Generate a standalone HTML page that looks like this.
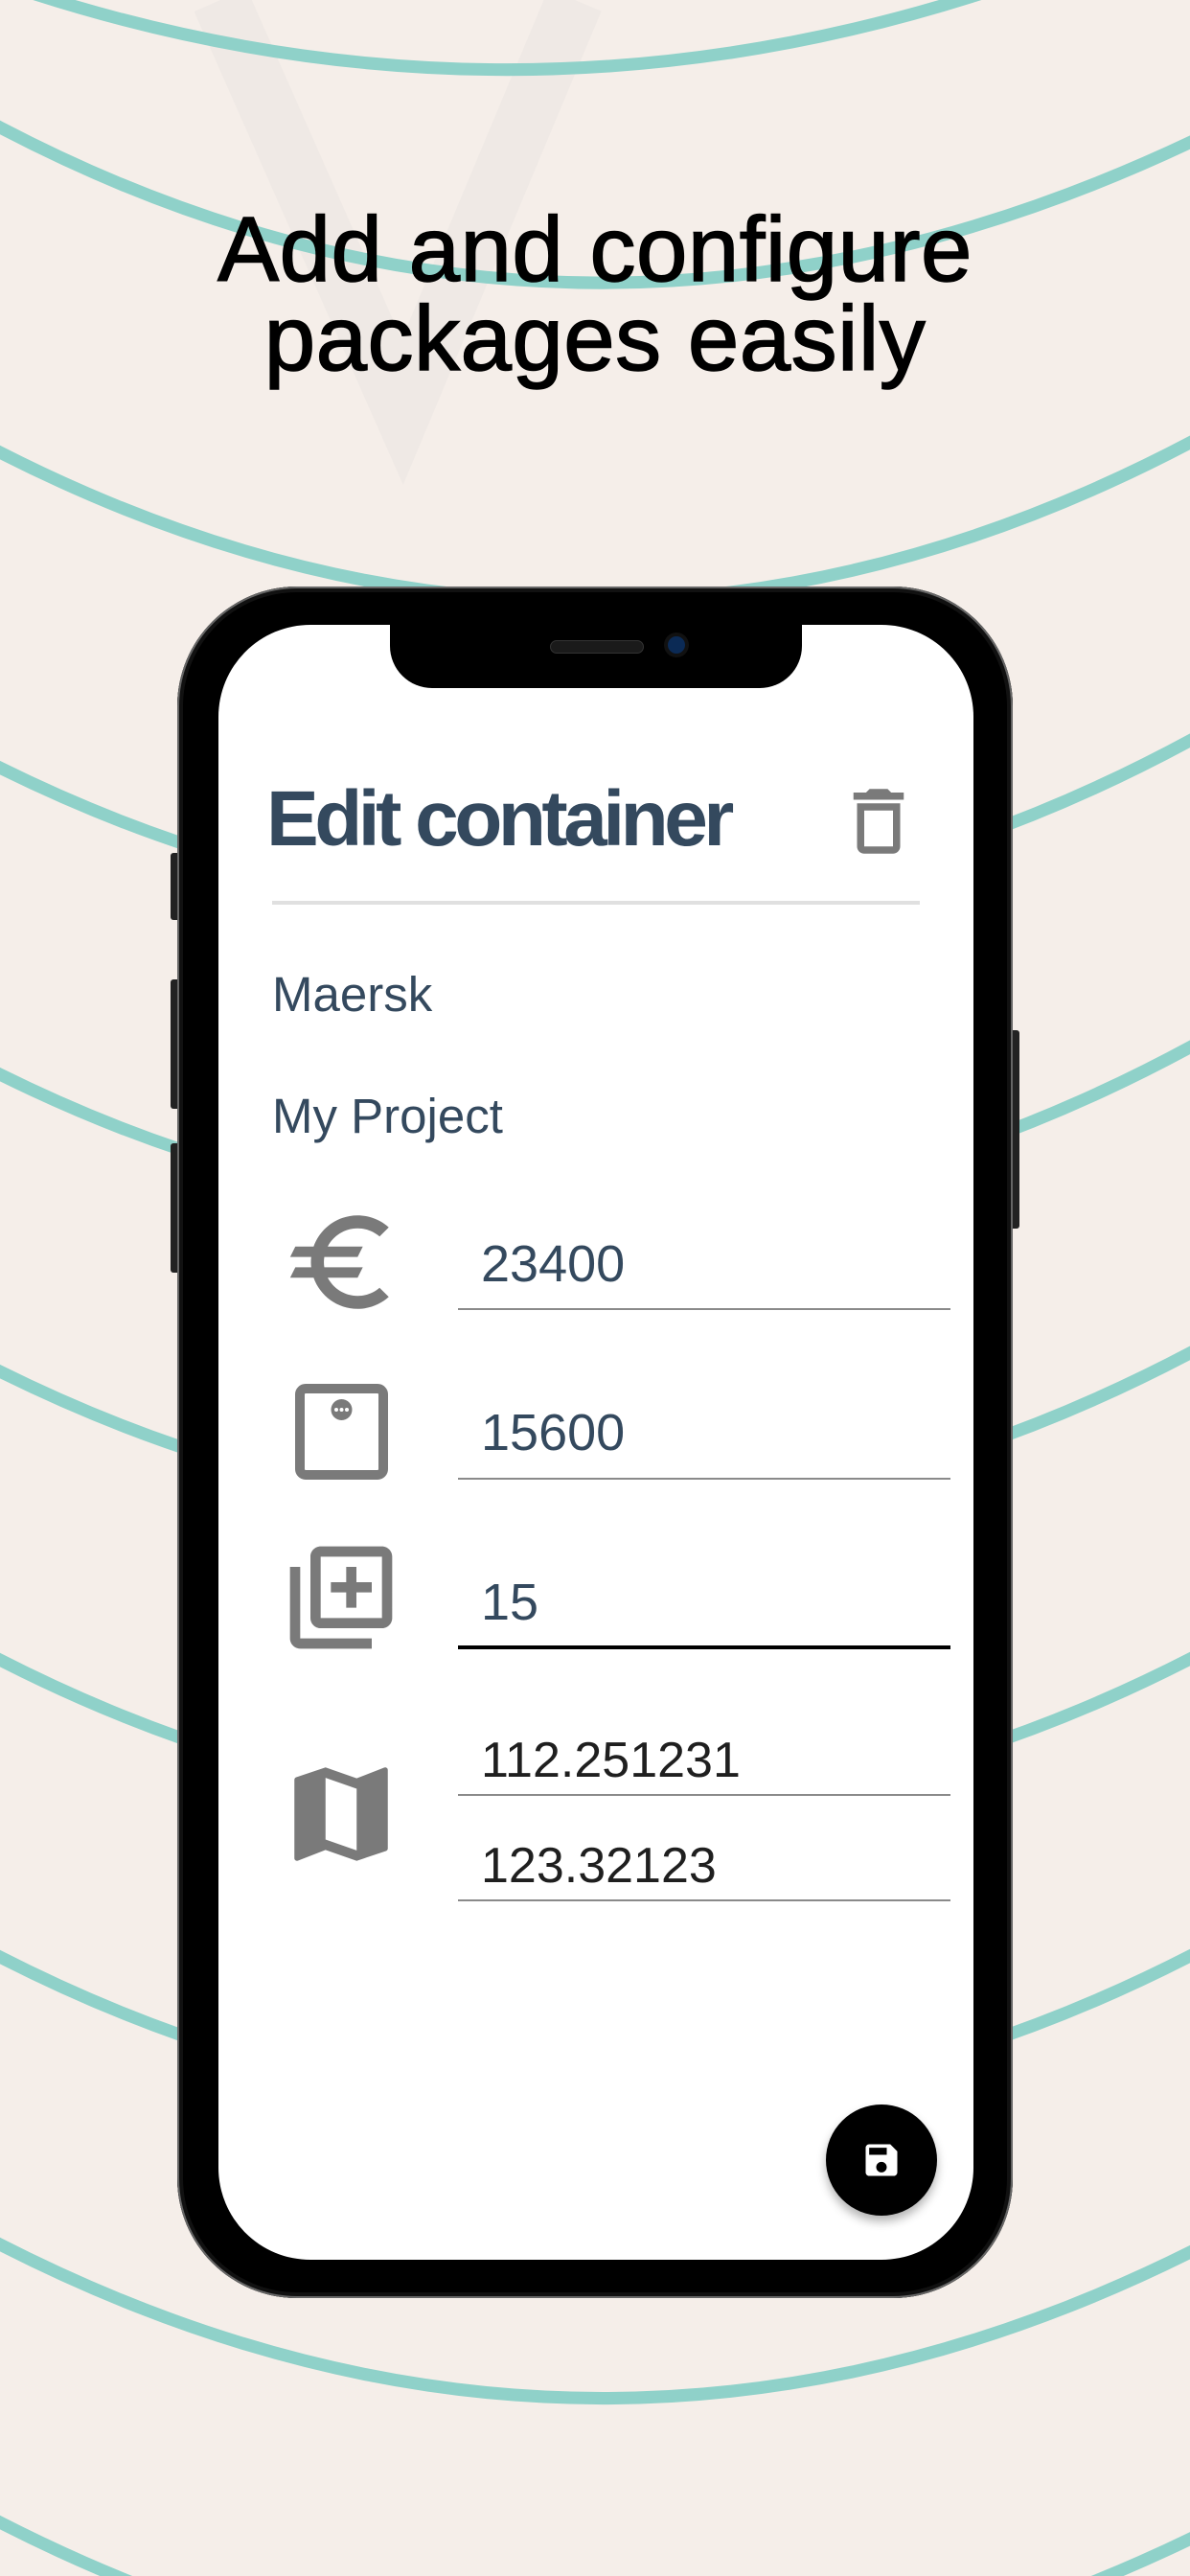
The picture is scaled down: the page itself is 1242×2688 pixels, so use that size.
<!DOCTYPE html>
<html><head><meta charset="utf-8"><style>
html,body{margin:0;padding:0}
body{width:1242px;height:2688px;position:relative;overflow:hidden;background:#f5eee9;font-family:"Liberation Sans",sans-serif}
.abs{position:absolute}
h1{position:absolute;left:0;top:214px;width:1242px;margin:0;text-align:center;font-weight:400;font-size:96px;line-height:93px;color:#000;letter-spacing:0.5px;-webkit-text-stroke:1.5px #000}
.t{position:absolute;color:#34495e;white-space:nowrap}
.ul{position:absolute;left:478px;width:514px;height:2px;background:#8a8a8a}
</style></head><body>
<svg class="abs" style="left:0;top:0" width="1242" height="2688" viewBox="0 0 1242 2688">
<path d="M230 0 L420 430 L600 0" fill="none" stroke="#efe9e5" stroke-width="60"/>
<g fill="none" stroke="#8fd1c9" stroke-width="13">
<path d="M-60 -40 Q620 220 1300 -120"/>
<path d="M-60 100 Q600 480 1300 120"/>
<path d="M-60 440 Q620 820 1300 430"/>
<path d="M-60 770 Q620 1140 1300 740"/>
<path d="M-60 1090 Q620 1460 1300 1060"/>
<path d="M-60 1400 Q620 1770 1300 1380"/>
<path d="M-60 1700 Q620 2080 1300 1700"/>
<path d="M-60 2010 Q620 2390 1300 2010"/>
<path d="M-60 2310 Q620 2690 1300 2320"/>
<path d="M-60 2600 Q620 2980 1300 2620"/>
</g>
</svg>
<h1>Add and configure<br>packages easily</h1>
<div class="abs" style="left:178px;top:890px;width:10px;height:70px;background:#222;border-radius:3px"></div>
<div class="abs" style="left:178px;top:1022px;width:10px;height:135px;background:#222;border-radius:3px"></div>
<div class="abs" style="left:178px;top:1193px;width:10px;height:135px;background:#222;border-radius:3px"></div>
<div class="abs" style="left:1054px;top:1075px;width:10px;height:207px;background:#222;border-radius:3px"></div>
<div class="abs" style="left:185px;top:612px;width:872px;height:1786px;background:#000;border-radius:125px;box-shadow:inset 0 0 0 2px #666,inset 0 0 0 6px #111"></div>
<div class="abs" style="left:228px;top:652px;width:788px;height:1706px;background:#fff;border-radius:96px;overflow:hidden">
  <div class="abs" style="left:179px;top:-10px;width:430px;height:76px;background:#000;border-radius:0 0 44px 44px"></div>
  <div class="abs" style="left:346px;top:16px;width:96px;height:12px;background:#1a1a1a;border-radius:7px;border:1px solid #333"></div>
  <div class="abs" style="left:469px;top:12px;width:18px;height:18px;background:#0b2a55;border-radius:50%;box-shadow:0 0 0 4px #111"></div>
</div>
<div class="t" style="left:278px;top:805px;font-size:82px;font-weight:700;letter-spacing:-4.5px;line-height:100px">Edit container</div>
<svg class="abs" style="left:872px;top:812px" width="90" height="90" viewBox="0 0 24 24"><path fill="#7a7a7a" d="M6 19c0 1.1.9 2 2 2h8c1.1 0 2-.9 2-2V7H6v12zM8 9h8v10H8V9zm7.5-5l-1-1h-5l-1 1H5v2h14V4z"/></svg>
<div class="abs" style="left:284px;top:940px;width:676px;height:4px;background:#e0e0e0"></div>
<div class="t" style="left:284px;top:1008px;font-size:51px;line-height:60px">Maersk</div>
<div class="t" style="left:284px;top:1135px;font-size:51px;line-height:60px">My Project</div>

<svg class="abs" style="left:292px;top:1252px" width="130" height="130" viewBox="0 0 24 24"><path fill="#7a7a7a" d="M15 18.5c-2.51 0-4.68-1.42-5.76-3.5H15l1-2H8.58c-.05-.33-.08-.66-.08-1s.03-.67.08-1H15l1-2H9.24C10.32 6.92 12.5 5.5 15 5.5c1.61 0 3.09.59 4.23 1.570L21 5.3C19.41 3.87 17.3 3 15 3c-3.92 0-7.240 2.51-8.48 6H3l-1 2h4.06c-.04.33-.06.66-.06 1s.02.67.06 1H3l-1 2h4.52c1.24 3.49 4.56 6 8.48 6 2.31 0 4.41-.87 6-2.3l-1.78-1.77c-1.130.98-2.6 1.57-4.22 1.57z"/></svg>
<div class="t" style="left:502px;top:1287px;font-size:54px;line-height:64px">23400</div>
<div class="ul" style="top:1365px"></div>

<svg class="abs" style="left:308px;top:1444px" width="97" height="100" viewBox="0 0 97 100"><rect x="5" y="5" width="87" height="90" rx="6" fill="none" stroke="#7a7a7a" stroke-width="10"/><circle cx="48.5" cy="27" r="11" fill="#7a7a7a"/><circle cx="43" cy="27" r="2" fill="#fff"/><circle cx="48.5" cy="27" r="2" fill="#fff"/><circle cx="54" cy="27" r="2" fill="#fff"/></svg>
<div class="t" style="left:502px;top:1463px;font-size:54px;line-height:64px">15600</div>
<div class="ul" style="top:1542px"></div>

<svg class="abs" style="left:292px;top:1603px" width="128" height="128" viewBox="0 0 24 24"><path fill="#7a7a7a" d="M4 6H2v14c0 1.1.9 2 2 2h14v-2H4V6zm16-4H8c-1.1 0-2 .9-2 2v12c0 1.1.9 2 2 2h12c1.1 0 2-.9 2-2V4c0-1.1-.9-2-2-2zm0 14H8V4h12v12zm-7-2h2v-3h3V9h-3V6h-2v3h-3v2h3v3z"/></svg>
<div class="t" style="left:502px;top:1640px;font-size:54px;line-height:64px">15</div>
<div class="ul" style="top:1717px;height:4px;background:#000"></div>

<svg class="abs" style="left:291px;top:1828px" width="130" height="130" viewBox="0 0 24 24"><path fill="#7a7a7a" d="M20.5 3l-.16.03L15 5.1 9 3 3.36 4.9c-.21.07-.36.25-.36.48V20.5c0 .28.22.5.5.5l.16-.03L9 18.9l6 2.1 5.64-1.9c.21-.07.36-.25.36-.48V3.5c0-.28-.22-.5-.5-.5zM15 19l-6-2.11V5l6 2.11V19z"/></svg>
<div class="t" style="left:502px;top:1805px;font-size:52px;line-height:64px;color:#1f1f1f">112.251231</div>
<div class="ul" style="top:1872px"></div>
<div class="t" style="left:502px;top:1915px;font-size:52px;line-height:64px;color:#1f1f1f">123.32123</div>
<div class="ul" style="top:1982px"></div>

<div class="abs" style="left:862px;top:2196px;width:116px;height:116px;border-radius:50%;background:#000;box-shadow:0 6px 10px rgba(0,0,0,.3)"></div>
<svg class="abs" style="left:898px;top:2232px" width="44" height="44" viewBox="0 0 24 24"><path fill="#fff" d="M17 3H5c-1.11 0-2 .9-2 2v14c0 1.1.89 2 2 2h14c1.1 0 2-.9 2-2V7l-4-4zm-5 16c-1.66 0-3-1.34-3-3s1.34-3 3-3 3 1.34 3 3-1.34 3-3 3zm3-10H5V5h10v4z"/></svg>
</body></html>
